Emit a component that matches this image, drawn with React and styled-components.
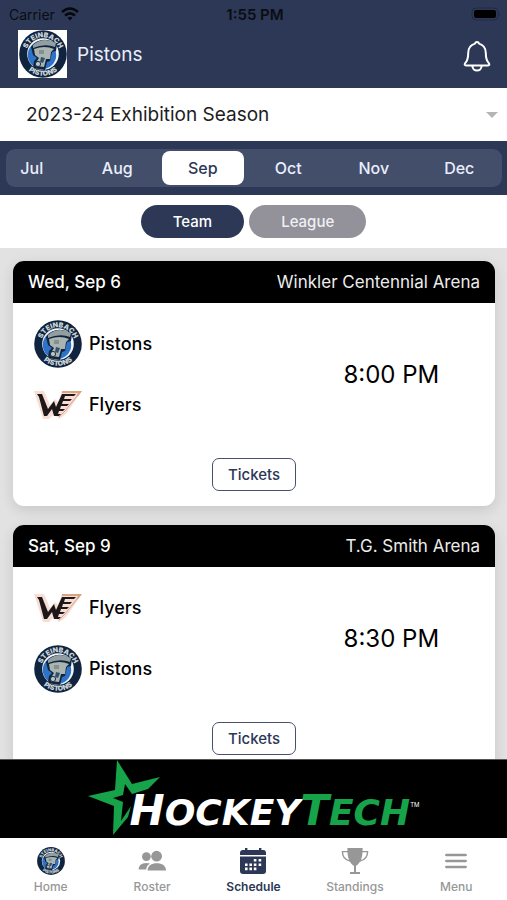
import { useId, useState } from 'react';
import styled, { createGlobalStyle } from 'styled-components';

const games = [
    { id: 1, date: "Wed, Sep 6", arena: "Winkler Centennial Arena", teams: ["Pistons", "Flyers"], time: "8:00 PM" },
    { id: 2, date: "Sat, Sep 9", arena: "T.G. Smith Arena", teams: ["Flyers", "Pistons"], time: "8:30 PM" },
]

const months = ["Jul", "Aug", "Sep", "Oct", "Nov", "Dec"]

const PistonsLogo = ({ size }) => {
    const id = useId()

    return (
        <svg width={size} height={size} viewBox="0 0 48 48" role="img" aria-label="Steinbach Pistons">
            <defs>
                <path id={id + "top"} d="M7.3 24 A16.7 16.7 0 0 1 40.7 24" />
                <path id={id + "bottom"} d="M2.2 24 A21.8 21.8 0 0 0 45.8 24" />
            </defs>
            <circle cx="24" cy="24" r="23.8" fill="#10243f" />
            <circle cx="24" cy="24" r="15.8" fill="#f1f6fa" />
            <circle cx="23" cy="25" r="14.2" fill="#2f73c9" />
            <path d="M12 17 Q22 4 38 14 L37 21 L33 22 L31 31 L28 32 L26 40 L14 38 L15 31 L18 28 L14 25Z" fill="#10243f" />
            <path d="M14 15 Q24 6 37 13 L36 17 Q26 13 14 18Z" fill="#929e9f" />
            <path d="M15 19 Q26 15 35 19 L32 22 L31 29 L27 29 L25 37 L17 36 L18 31 L20 28 L16 25Z" fill="#aab4b1" />
            <path d="M20 20 h5 v4 h-5Z" fill="#84918f" />
            <path d="M22 27 l4 1 -2 5 -3 -1Z" fill="#33516f" />
            <circle cx="19" cy="34" r="2.6" fill="#bac4c2" stroke="#1a3048" />
            <g fill="#c9d3d7" fontFamily="Inter, sans-serif" fontWeight="900" fontSize="7" textAnchor="middle">
                <text><textPath href={"#" + id + "top"} startOffset="50%">STEINBACH</textPath></text>
                <text><textPath href={"#" + id + "bottom"} startOffset="50%">PISTONS</textPath></text>
            </g>
        </svg>
    )
}

const FlyersLogo = () => (
    <svg width="48" height="28" viewBox="0 0 48 28" role="img" aria-label="Winkler Flyers">
        <path d="M0 0 H10 L16 14 L21 8 L24 11 L28 0 H48 L32 23 L25 28 L20 23 L15 28 L9 28Z" fill="#f8ddd5" />
        <path d="M28 1 H46 L43 5" fill="none" stroke="#d9a482" strokeWidth="2" />
        <path d="M3 3 H8 L14 18 L20 10 L22 16 L28 3 H42 L40 5 H31 L30 8 H38 L36 10 H29 L28 13 H35 L33 15 H27 L26 18 H31 L29 20 H25 L24 23 H27 L25 25 H20 L18 18 L13 25 H10 L5 6Z" fill="#1c1819" />
        <path d="M43 5 L31 20 L25 26" fill="none" stroke="#dba08f" strokeWidth="1" />
    </svg>
)

const WifiIcon = () => (
    <svg width="18" height="14" viewBox="0 0 18 14" fill="none" stroke="#05070c" strokeWidth="2.6" aria-hidden="true">
        <path d="M1 5 Q9 -2 17 5" />
        <path d="M4 8.6 Q9 4.2 14 8.6" />
        <path d="M6.6 10.8 Q9 8.6 11.4 10.8 L9 13.4Z" fill="#05070c" stroke="none" />
    </svg>
)

const BatteryIcon = () => (
    <svg width="30" height="14" viewBox="0 0 30 14" aria-hidden="true">
        <rect x="1" y="1" width="26" height="12" rx="4" fill="none" stroke="#1f2a44" />
        <rect x="3" y="3" width="22" height="8" rx="2" fill="#000" />
        <path d="M28 5 q2 2 0 4Z" fill="#1f2a44" />
    </svg>
)

const BellIcon = () => (
    <svg width="28" height="32" viewBox="0 0 28 32" fill="none" stroke="#fff" strokeWidth="2" strokeLinejoin="round" aria-hidden="true">
        <path d="M14 2 Q15.6 2 16 3.6 C21 5 22.8 9 22.8 13 C22.8 19 23.6 21 26 23.4 Q27 25.4 25 25.4 H3 Q1 25.4 2 23.4 C4.4 21 5.2 19 5.2 13 C5.2 9 7 5 12 3.6 Q12.4 2 14 2Z" />
        <path d="M9.4 26 C9.6 32 18.4 32 18.6 26" />
    </svg>
)

const RosterIcon = () => (
    <svg width="28" height="28" viewBox="0 0 28 28" fill="currentColor" aria-hidden="true">
        <circle cx="8.4" cy="9.6" r="4.4" />
        <path d="M.6 22.6 Q.6 16.4 8.4 16 L12 16.4 Q8.4 18.4 8.2 22.6Z" />
        <circle cx="18.6" cy="9.2" r="5.4" />
        <path d="M9.6 23.6 C9.6 18.6 13.6 16.2 18.8 16.2 C24 16.2 28 18.6 28 23.6Z" />
    </svg>
)

const CalendarIcon = () => (
    <svg width="28" height="28" viewBox="0 0 28 28" fill="currentColor" aria-hidden="true">
        <path d="M1 8 V6 Q1 3 4 3 H6 V1 H8.4 V3 H20 V1 H22.4 V3 H24.4 Q27 3 27 6 V8Z" />
        <path d="M1 9.6 H27 V24 Q27 27 24 27 H4 Q1 27 1 24Z" />
        <path fill="#fff" d="M14.8 12 h2.6 v2.6 h-2.6Z M19.6 12 h2.6 v2.6 h-2.6Z M6 16.4 h2.6 v2.6 h-2.6Z M10.4 16.4 h2.6 v2.6 h-2.6Z M14.8 16.4 h2.6 v2.6 h-2.6Z M19.6 16.4 h2.6 v2.6 h-2.6Z M6 20.6 h2.6 v2.6 h-2.6Z M10.4 20.6 h2.6 v2.6 h-2.6Z M14.8 20.6 h2.6 v2.6 h-2.6Z" />
    </svg>
)

const TrophyIcon = () => (
    <svg width="28" height="28" viewBox="0 0 28 28" aria-hidden="true">
        <path fill="currentColor" d="M6.4 1 H21.6 C21.8 9 20.4 15 15 19 V25 H19 V27 H9 V25 H13 V19 C7.6 15 6.2 9 6.4 1Z" />
        <path fill="none" stroke="currentColor" strokeWidth="1.4" d="M7 4.6 H1.4 C1.4 9.6 3.6 13 9 14 M21 4.6 H26.6 C26.6 9.6 24.4 13 19 14" />
    </svg>
)

const MenuIcon = () => (
    <svg width="28" height="28" viewBox="0 0 28 28" fill="none" stroke="currentColor" strokeWidth="2.6" strokeLinecap="round" aria-hidden="true">
        <path d="M4.4 8 H23.6 M4.4 14 H23.6 M4.4 20 H23.6" />
    </svg>
)

const StarLogo = () => (
    <svg width="72" height="76" viewBox="0 0 72 76" aria-hidden="true">
        <path fill="#16a34a" d="M29 0 L44 24 L72 17 L60 29 L44 34 L37 24 L35 35 L25 38 L35 42 L33 61 L43 46 L40 57 L25 75 L26 46 L0 36 L27 30Z" />
    </svg>
)

const GameCard = ({ game }) => (
    <Card>
        <CardHeader>
            <span>{game.date}</span>
            <Arena>{game.arena}</Arena>
        </CardHeader>
        <Matchup>
            <Teams>
                {game.teams.map((team) => (
                    <TeamRow key={team}>
                        {team === "Pistons" ? <PistonsLogo size={48} /> : <FlyersLogo />}
                        {team}
                    </TeamRow>
                ))}
            </Teams>
            <Time>{game.time}</Time>
        </Matchup>
        <TicketsButton type="button">Tickets</TicketsButton>
    </Card>
)

const App = () => {

    const [month, setMonth] = useState("Sep")
    const [view, setView] = useState("Team")
    const [tab, setTab] = useState("Schedule")

    const tabs = [
        { name: "Home", icon: <PistonsLogo size={28} /> },
        { name: "Roster", icon: <RosterIcon /> },
        { name: "Schedule", icon: <CalendarIcon /> },
        { name: "Standings", icon: <TrophyIcon /> },
        { name: "Menu", icon: <MenuIcon /> },
    ]

    return (
        <Screen>
            <GlobalStyle />
            <StatusBar>
                <Carrier>Carrier <WifiIcon /></Carrier>
                <Clock>1:55 PM</Clock>
                <Battery><BatteryIcon /></Battery>
            </StatusBar>
            <Header>
                <LogoBox><PistonsLogo size={48} /></LogoBox>
                <Title>Pistons</Title>
                <BellButton type="button" aria-label="Notifications"><BellIcon /></BellButton>
            </Header>
            <SeasonBar>
                <SeasonSelect aria-label="Season">
                    <option>2023-24 Exhibition Season</option>
                </SeasonSelect>
                <Caret />
            </SeasonBar>
            <MonthBar>
                <MonthClip>
                    <MonthTrack>
                        {months.map((m) => (
                            <Month key={m} type="button" $active={m === month} onClick={() => setMonth(m)}>{m}</Month>
                        ))}
                    </MonthTrack>
                </MonthClip>
            </MonthBar>
            <ViewBar>
                {["Team", "League"].map((v) => (
                    <Pill key={v} type="button" $active={v === view} onClick={() => setView(v)}>{v}</Pill>
                ))}
            </ViewBar>
            <Games>
                {games.map((game) => <GameCard key={game.id} game={game} />)}
            </Games>
            <Banner href="#hockeytech" aria-label="HockeyTech">
                <StarLogo />
                <Wordmark>
                    <Cap>H</Cap>OCKEY<Green><Cap>T</Cap>ECH</Green>
                </Wordmark>
                <Trademark>TM</Trademark>
            </Banner>
            <TabBar>
                {tabs.map((t) => (
                    <Tab key={t.name} type="button" $active={t.name === tab} onClick={() => setTab(t.name)}>
                        {t.icon}
                        {t.name}
                    </Tab>
                ))}
            </TabBar>
        </Screen>
    );
};


const GlobalStyle = createGlobalStyle`
    *{
        box-sizing: border-box;
    }
    body{
        margin: 0;
        font-family: Inter, "Liberation Sans", sans-serif;
    }
    button, select{
        font-family: inherit;
        cursor: pointer;
    }
    svg{
        display: block;
        flex-shrink: 0;
    }
`
const Screen = styled.div`
    display: flex;
    flex-direction: column;
    height: 100vh;
    background: #fff;
`
const StatusBar = styled.div`
    display: grid;
    grid-template-columns: 1fr auto 1fr;
    align-items: center;
    height: 28px;
    padding: 0 6px 0 9px;
    background: #2c3856;
    color: #0a0d14;
    font-size: 14px;
`
const Carrier = styled.span`
    display: flex;
    align-items: center;
    gap: 6px;
`
const Clock = styled.span`
    font-size: 15px;
    font-weight: 600;
`
const Battery = styled.span`
    justify-self: end;
`
const Header = styled.header`
    display: flex;
    align-items: center;
    gap: 10px;
    height: 60px;
    padding: 0 16px 8px 18px;
    background: #2c3856;
    color: #e9eefb;
`
const LogoBox = styled.div`
    display: flex;
    justify-content: center;
    width: 49px;
    background: #fff;
`
const Title = styled.h1`
    flex: 1;
    margin: 0;
    font-size: 19px;
    font-weight: 400;
`
const BellButton = styled.button`
    padding: 4px 0 0;
    border: 0;
    background: none;
`
const SeasonBar = styled.div`
    display: flex;
    align-items: center;
    height: 53px;
    padding-right: 9px;
`
const SeasonSelect = styled.select`
    flex: 1;
    height: 100%;
    padding: 0 0 0 26px;
    border: 0;
    appearance: none;
    background: none;
    color: #1c1c1e;
    font-size: 19px;
`
const Caret = styled.span`
    border: 6px solid transparent;
    border-top-color: #b5b5b5;
    border-bottom: 0;
    pointer-events: none;
`
const MonthBar = styled.div`
    padding: 8px 5px 8px 6px;
    background: #2c3856;
`
const MonthClip = styled.div`
    overflow: hidden;
    border-radius: 9px;
    background: #434e6b;
`
const MonthTrack = styled.div`
    display: flex;
    margin-left: -17px;
`
const Month = styled.button`
    flex: 1;
    height: 34px;
    margin: 2px;
    padding: 0;
    border: 0;
    border-radius: 8px;
    background: ${(props) => props.$active ? "#fff" : "none"};
    color: ${(props) => props.$active ? "#2c3856" : "#e9eefb"};
    font-size: 16px;
    font-weight: 500;
`
const ViewBar = styled.div`
    display: flex;
    justify-content: center;
    align-items: center;
    gap: 5px;
    height: 53px;
`
const Pill = styled.button`
    height: 33px;
    padding: 0 32px;
    border: 0;
    border-radius: 17px;
    background: ${(props) => props.$active ? "#2c3856" : "#93929b"};
    color: ${(props) => props.$active ? "#fff" : "#f0f0f4"};
    font-size: 15px;
    font-weight: 500;
`
const Games = styled.main`
    flex: 1;
    min-height: 0;
    padding: 13px 12px 0 13px;
    overflow: hidden;
    background: #e2e2e2;
`
const Card = styled.article`
    display: flex;
    flex-direction: column;
    align-items: center;
    margin-bottom: 19px;
    padding-bottom: 15px;
    border-radius: 11px;
    background: #fff;
    box-shadow: 0 4px 14px rgba(0, 0, 0, .12);
`
const CardHeader = styled.div`
    display: flex;
    align-items: center;
    justify-content: space-between;
    width: 100%;
    height: 42px;
    padding: 0 15px;
    border-radius: 11px 11px 0 0;
    background: #000;
    color: #fff;
    font-size: 17px;
    font-weight: 500;
`
const Arena = styled.span`
    color: #ececec;
    font-weight: 400;
`
const Matchup = styled.div`
    display: grid;
    grid-template-columns: 57% 43%;
    align-items: center;
    width: 100%;
    padding: 10px 0 23px;
`
const Teams = styled.div`
    padding-left: 21px;
`
const TeamRow = styled.div`
    display: flex;
    align-items: center;
    gap: 7px;
    height: 61px;
    color: #000;
    font-size: 18px;
    font-weight: 500;
`
const Time = styled.time`
    text-align: center;
    font-size: 24px;
    font-weight: 400;
`
const TicketsButton = styled.button`
    height: 33px;
    padding: 0 15px;
    border: 1px solid #47506f;
    border-radius: 7px;
    background: #fff;
    color: #2c3856;
    font-size: 15px;
    font-weight: 500;
`
const Banner = styled.a`
    display: flex;
    justify-content: center;
    height: 79px;
    border-top: 1px solid #555;
    background: #000;
    color: #fff;
    text-decoration: none;
`
const Wordmark = styled.span`
    align-self: flex-end;
    margin-left: -30px;
    font-family: "DejaVu Sans", sans-serif;
    font-size: 36px;
    font-style: italic;
    font-weight: 700;
    line-height: 50px;
`
const Cap = styled.span`
    font-size: 42px;
`
const Green = styled.span`
    color: #16a34a;
`
const Trademark = styled.sup`
    padding-top: 42px;
    font-size: 6px;
    line-height: 6px;
`
const TabBar = styled.nav`
    display: grid;
    grid-template-columns: repeat(5, 1fr);
    height: 62px;
    background: #fff;
`
const Tab = styled.button`
    display: flex;
    flex-direction: column;
    align-items: center;
    gap: 4px;
    padding: 9px 0 0;
    border: 0;
    background: none;
    color: ${(props) => props.$active ? "#2c3856" : "#979797"};
    font-size: 12px;
    font-weight: ${(props) => props.$active ? 600 : 500};
`
export default App;
